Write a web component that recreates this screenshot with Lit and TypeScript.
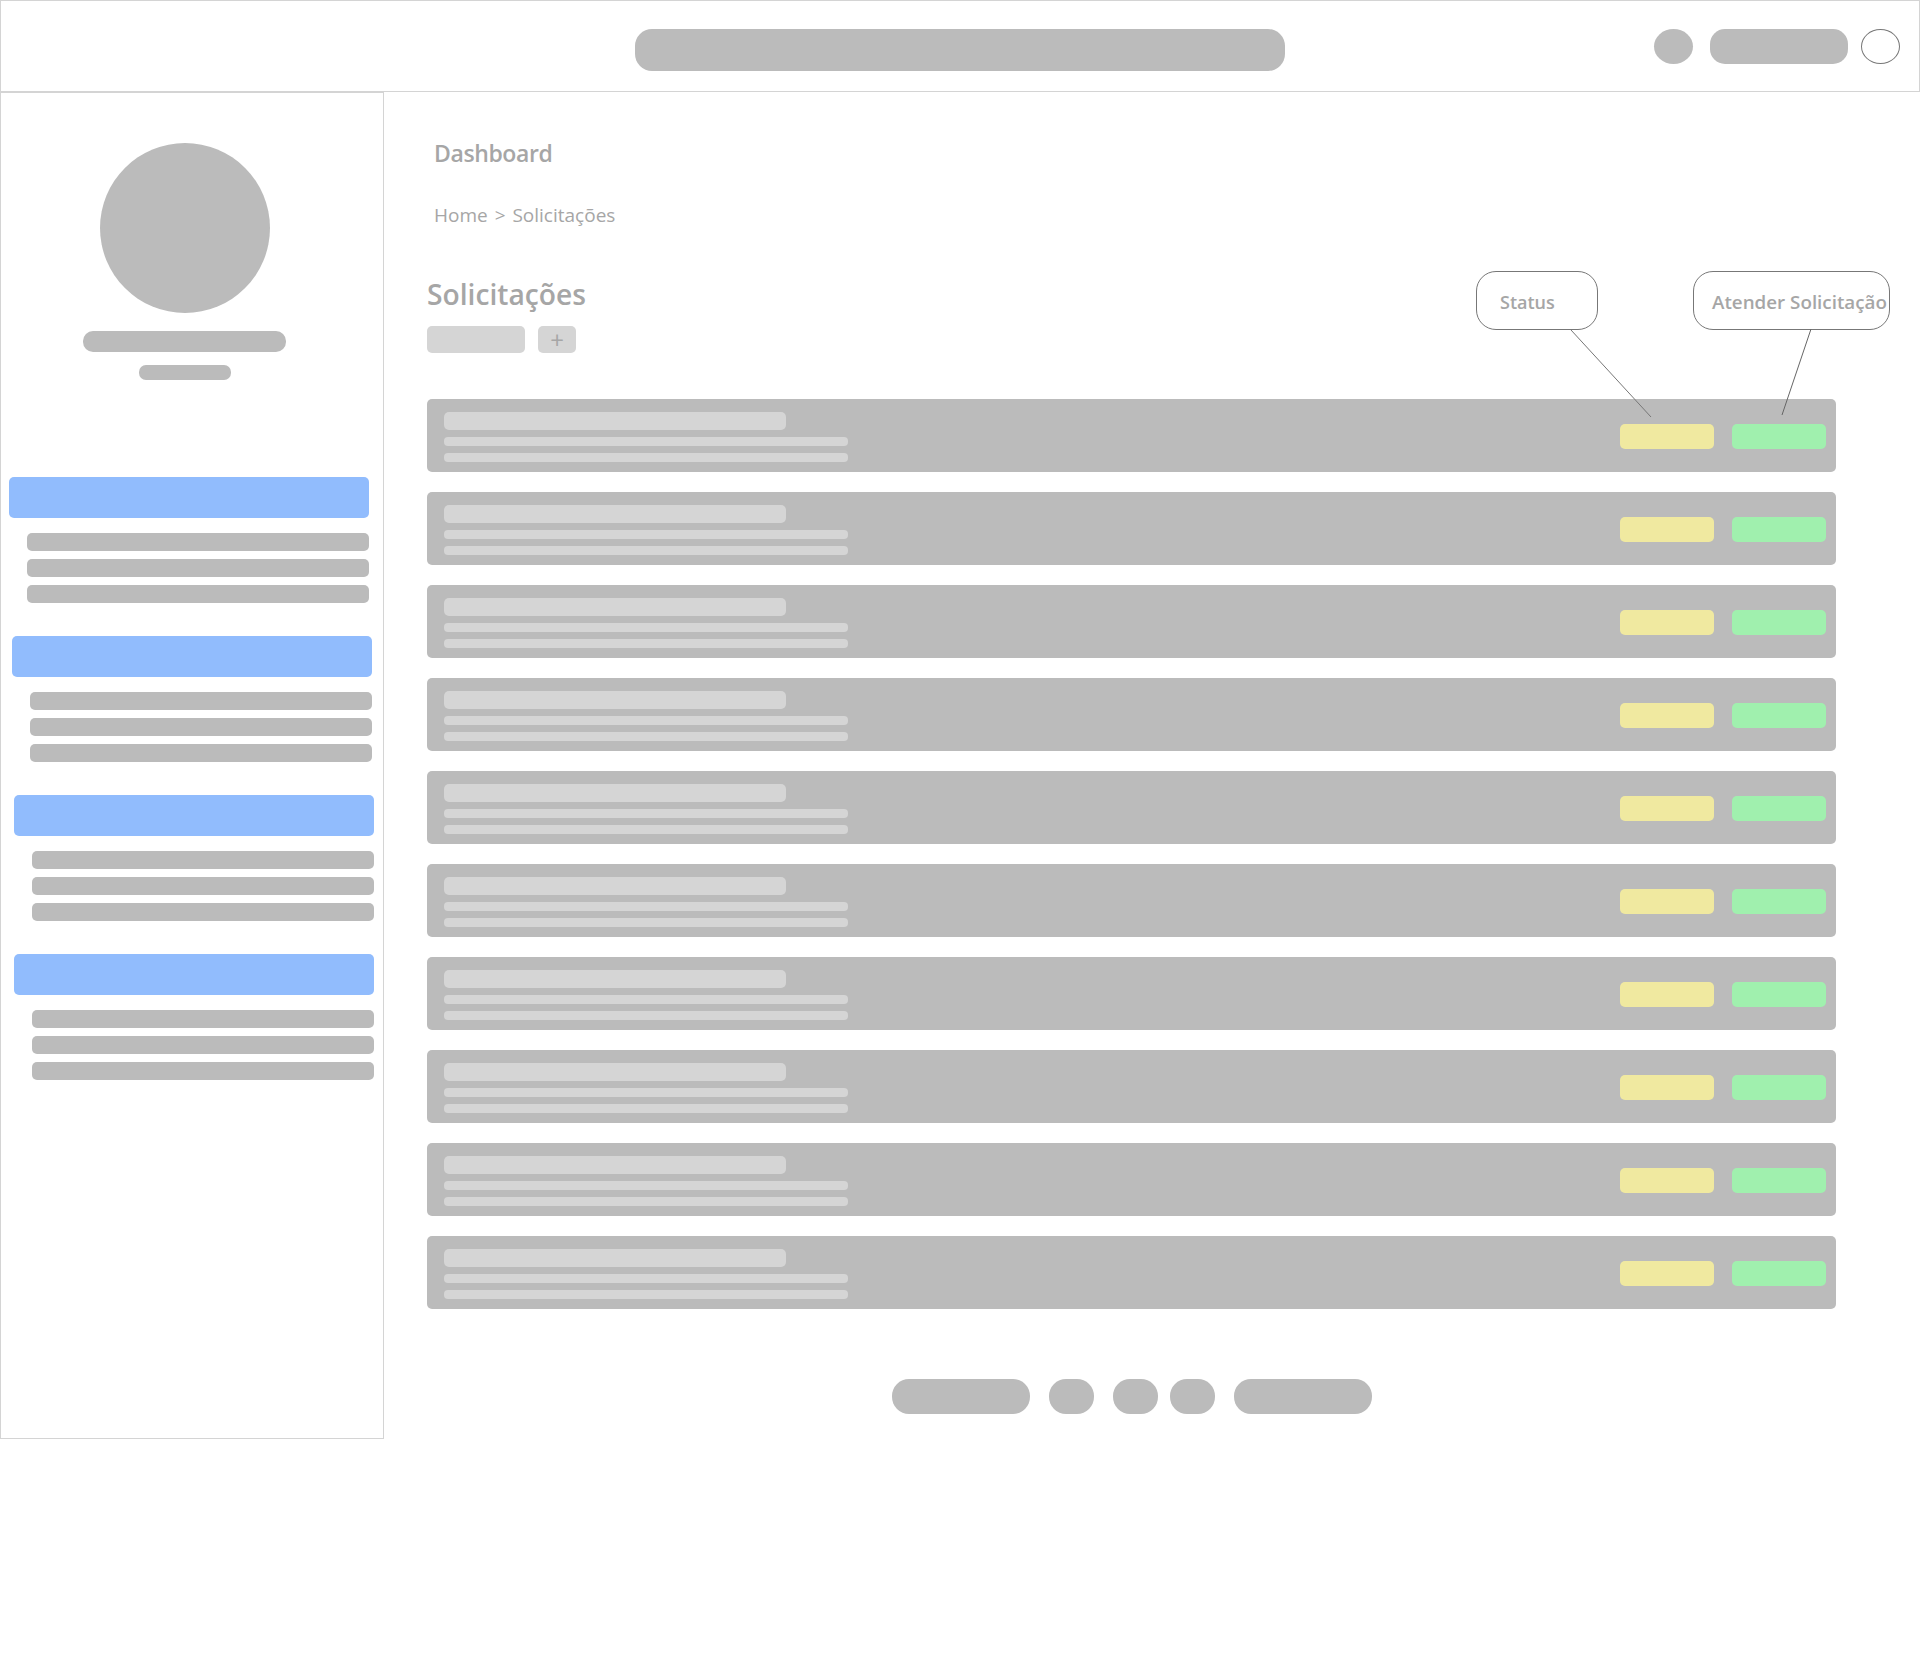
import { LitElement, html, css } from 'lit';
import { customElement } from 'lit/decorators.js';

const NAV_GROUPS = [{ left: 9 }, { left: 12 }, { left: 14 }, { left: 14 }];
const ROWS = Array.from({ length: 10 });

@customElement('app-root')
export class AppRoot extends LitElement {
  static styles = css`
    :host {
      display: block;
      width: 1920px;
      height: 1672px;
      position: relative;
      background: #fff;
      font-family: 'Open Sans', 'Noto Sans', sans-serif;
      color: #a6a6a6;
      overflow: hidden;
    }

    .topbar {
      box-sizing: border-box;
      height: 92px;
      border: 1px solid #d4d4d4;
      display: grid;
      grid-template-columns: 1fr 650px 1fr;
      padding-top: 28px;
      align-items: start;
    }
    .search {
      height: 42px;
      border-radius: 17px;
      background: #bbb;
    }
    .top-actions {
      display: flex;
      justify-content: flex-end;
      gap: 17px;
      padding-right: 19px;
    }
    .top-circle {
      width: 39px;
      height: 35px;
      border-radius: 50%;
      background: #bbb;
    }
    .top-pill {
      width: 138px;
      height: 35px;
      border-radius: 15px;
      background: #bbb;
    }
    .top-circle.outline {
      box-sizing: border-box;
      background: #fff;
      border: 1px solid #777;
      margin-left: -4px;
    }

    .layout {
      display: flex;
      align-items: flex-start;
    }

    .sidebar {
      box-sizing: border-box;
      width: 384px;
      height: 1347px;
      border: 1px solid #d4d4d4;
      flex: none;
    }
    .profile {
      display: flex;
      flex-direction: column;
      align-items: center;
      padding: 50px 0 0 0;
      width: 368px;
    }
    .avatar {
      width: 170px;
      height: 170px;
      border-radius: 50%;
      background: #bbb;
    }
    .name {
      width: 203px;
      height: 21px;
      margin: 18px 1px 0 0;
      border-radius: 10px;
      background: #bbb;
    }
    .role {
      width: 92px;
      height: 15px;
      margin-top: 13px;
      border-radius: 7px;
      background: #bbb;
    }
    .nav {
      margin-top: 97px;
      display: flex;
      flex-direction: column;
      gap: 33px;
    }
    .nav-group {
      width: 360px;
      display: flex;
      flex-direction: column;
      gap: 8px;
    }
    .nav-head {
      height: 41px;
      margin-bottom: 7px;
      border-radius: 5px;
      background: #91bcfd;
    }
    .nav-item {
      height: 18px;
      margin-left: 18px;
      border-radius: 5px;
      background: #bbb;
    }

    .main {
      width: 1409px;
      margin-left: 43px;
      padding-top: 45px;
    }
    .page-label {
      margin: 0 0 0 7px;
      font-size: 23px;
      line-height: 32px;
      font-weight: 600;
      letter-spacing: -0.4px;
    }
    .crumb {
      margin: 32px 0 0 7px;
      font-size: 19px;
      line-height: 28px;
      font-weight: 400;
      word-spacing: 2px;
    }
    .title {
      margin: 45px 0 0 0;
      font-size: 28.2px;
      line-height: 40px;
      font-weight: 600;
    }
    .tools {
      display: flex;
      gap: 13px;
      margin-top: 12px;
    }
    .tool {
      width: 98px;
      height: 27px;
      border-radius: 5px;
      background: #d5d5d5;
    }
    .tool-add {
      width: 38px;
      height: 27px;
      border-radius: 5px;
      background: #d5d5d5;
      display: flex;
      align-items: center;
      justify-content: center;
      font-size: 24px;
      line-height: 27px;
      color: #a6a6a6;
    }

    .rows {
      margin-top: 46px;
      display: flex;
      flex-direction: column;
      gap: 20px;
    }
    .row {
      box-sizing: border-box;
      height: 73px;
      border-radius: 5px;
      background: #bbb;
      padding: 13px 10px 0 17px;
      display: flex;
      justify-content: space-between;
    }
    .row-text {
      display: flex;
      flex-direction: column;
      align-items: flex-start;
      gap: 7px;
    }
    .row-title {
      width: 342px;
      height: 18px;
      border-radius: 5px;
      background: #d5d5d5;
    }
    .row-line {
      width: 404px;
      height: 9px;
      border-radius: 4px;
      background: #d5d5d5;
    }
    .row-actions {
      display: flex;
      gap: 18px;
      padding-top: 12px;
    }
    .chip {
      width: 94px;
      height: 25px;
      border-radius: 5px;
    }
    .chip.status {
      background: #f0e9a0;
    }
    .chip.attend {
      background: #a0f0ae;
    }

    .pager {
      margin-top: 70px;
      display: flex;
      justify-content: center;
    }
    .pager div {
      height: 35px;
      border-radius: 17px;
      background: #bbb;
    }
    .pager .wide {
      width: 138px;
    }
    .pager .small {
      width: 45px;
    }
    .pager .g19 {
      margin-left: 19px;
    }
    .pager .g12 {
      margin-left: 12px;
    }

    .note {
      position: absolute;
      top: 271px;
      box-sizing: border-box;
      height: 59px;
      border: 1px solid #777;
      border-radius: 20px;
      background: #fff;
      line-height: 61px;
      font-weight: 600;
      white-space: nowrap;
    }
    .note.status-note {
      left: 1476px;
      width: 122px;
      padding-left: 23px;
      font-size: 18px;
    }
    .note.attend-note {
      left: 1693px;
      width: 197px;
      padding-left: 18px;
      font-size: 18.8px;
    }
    .leaders {
      position: absolute;
      left: 0;
      top: 0;
      pointer-events: none;
    }
  `;

  renderRow() {
    return html`<div class="row">
      <div class="row-text">
        <div class="row-title"></div>
        <div class="row-line"></div>
        <div class="row-line"></div>
      </div>
      <div class="row-actions">
        <div class="chip status"></div>
        <div class="chip attend"></div>
      </div>
    </div>`;
  }

  render() {
    return html`
      <header class="topbar">
        <div></div>
        <div class="search"></div>
        <div class="top-actions">
          <div class="top-circle"></div>
          <div class="top-pill"></div>
          <div class="top-circle outline"></div>
        </div>
      </header>

      <div class="layout">
        <aside class="sidebar">
          <div class="profile">
            <div class="avatar"></div>
            <div class="name"></div>
            <div class="role"></div>
          </div>
          <nav class="nav">
            ${NAV_GROUPS.map(
              (g) => html`<div class="nav-group" style="margin-left:${g.left - 1}px">
                <div class="nav-head"></div>
                <div class="nav-item"></div>
                <div class="nav-item"></div>
                <div class="nav-item"></div>
              </div>`
            )}
          </nav>
        </aside>

        <main class="main">
          <h2 class="page-label">Dashboard</h2>
          <div class="crumb">Home &gt; Solicitações</div>
          <h1 class="title">Solicitações</h1>
          <div class="tools">
            <div class="tool"></div>
            <div class="tool-add">+</div>
          </div>
          <div class="rows">${ROWS.map(() => this.renderRow())}</div>
          <div class="pager">
            <div class="wide"></div>
            <div class="small g19"></div>
            <div class="small g19"></div>
            <div class="small g12"></div>
            <div class="wide g19"></div>
          </div>
        </main>
      </div>

      <div class="note status-note">Status</div>
      <div class="note attend-note">Atender Solicitação</div>
      <svg class="leaders" width="1920" height="500" viewBox="0 0 1920 500">
        <line x1="1571" y1="330" x2="1651" y2="417" stroke="#777" stroke-width="1"></line>
        <line x1="1811" y1="329" x2="1782" y2="415" stroke="#666" stroke-width="1"></line>
      </svg>
    `;
  }
}
